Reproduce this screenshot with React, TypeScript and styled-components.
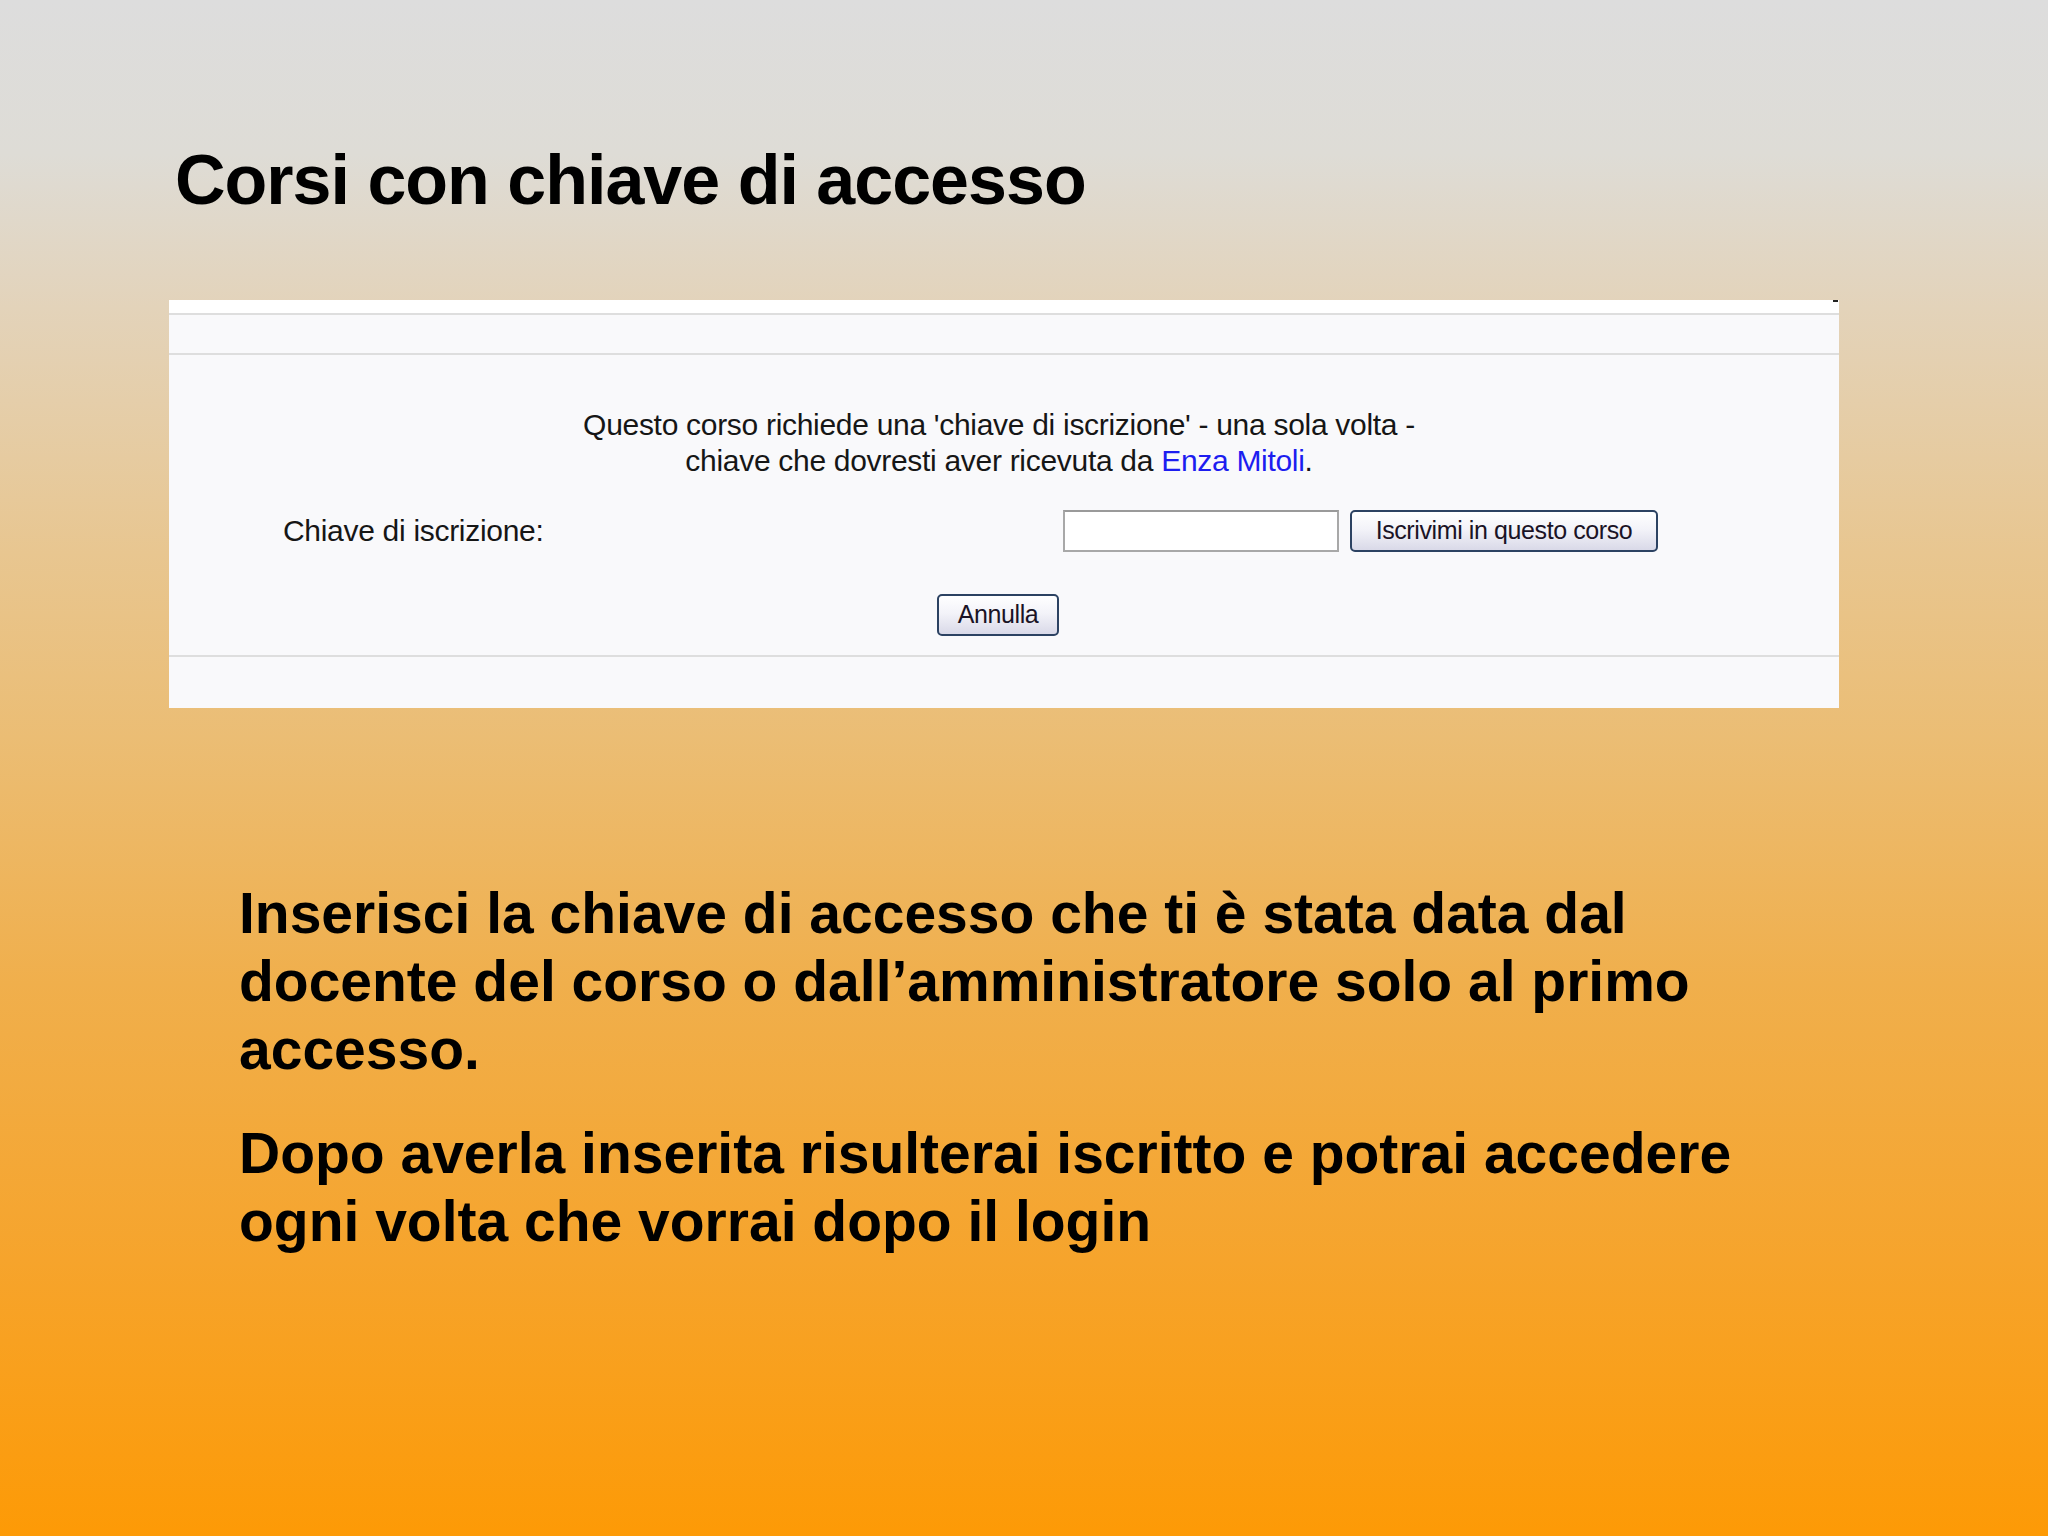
import styled, { createGlobalStyle } from "styled-components";

const GlobalStyle = createGlobalStyle`
  html, body {
    margin: 0;
    padding: 0;
    overflow: hidden;
  }

  body {
    font-family: "Liberation Sans", Arial, sans-serif;
    color: #000;
  }
`;

const Slide = styled.div`
  width: 2048px;
  height: 1536px;
  box-sizing: border-box;
  padding: 145px 0 0 0;
  display: flex;
  flex-direction: column;
  background: linear-gradient(
    to bottom,
    #dddddd 0%,
    #dedcd6 10%,
    #e3d3ba 20%,
    #e8c690 36%,
    #ebbd74 48%,
    #f0af4c 64%,
    #f6a42c 82%,
    #fd9a06 100%
  );
`;

const Title = styled.h1`
  margin: 0 0 0 175px;
  font-size: 70px;
  line-height: 70px;
  font-weight: 700;
  letter-spacing: -1px;
`;

const Panel = styled.div`
  position: relative;
  margin: 85px 0 0 169px;
  width: 1670px;
  height: 408px;
  background: #f9f9fb;
  display: flex;
  flex-direction: column;

  &::after {
    content: "";
    position: absolute;
    top: 0;
    right: 1px;
    width: 5px;
    height: 2px;
    background: #222;
  }
`;

const Band = styled.div<{ $h: number; $white?: boolean }>`
  height: ${(p) => p.$h}px;
  background: ${(p) => (p.$white ? "#ffffff" : "transparent")};
`;

const Rule = styled.div`
  height: 2px;
  background: #dedede;
`;

const Content = styled.div`
  height: 300px;
  box-sizing: border-box;
  padding-top: 52px;
  display: flex;
  flex-direction: column;
  align-items: stretch;
`;

const Notice = styled.p`
  margin: 0;
  padding-right: 10px;
  text-align: center;
  font-size: 30px;
  line-height: 36px;
  letter-spacing: -0.3px;
  color: #161616;

  & > a {
    color: #1d1df0;
    text-decoration: none;
  }
`;

const FormRow = styled.div`
  margin-top: 31px;
  display: grid;
  grid-template-columns: 780px auto;
  align-items: center;
  padding-left: 114px;
  height: 42px;
`;

const Label = styled.label`
  font-size: 30px;
  letter-spacing: -0.3px;
  color: #161616;
`;

const Controls = styled.div`
  display: flex;
  align-items: center;
  gap: 11px;
`;

const KeyInput = styled.input`
  width: 276px;
  height: 42px;
  box-sizing: border-box;
  border: 2px solid #a8a8a8;
  border-top-color: #9a9a9a;
  background: #ffffff;
  margin: 0;
  padding: 0 6px;
  font-size: 24px;
  font-family: "Liberation Sans", Arial, sans-serif;
`;

const Button = styled.button<{ $w: number }>`
  width: ${(p) => p.$w}px;
  height: 42px;
  box-sizing: border-box;
  margin: 0;
  padding: 0 0 2px;
  border: 2px solid #2c4262;
  border-radius: 5px;
  background: linear-gradient(to bottom, #ffffff 0%, #f3f3f9 45%, #d9d9e8 100%);
  font-family: "Liberation Sans", Arial, sans-serif;
  font-size: 25px;
  letter-spacing: -0.4px;
  color: #1a1326;
  cursor: pointer;
`;

const CancelRow = styled.div`
  margin-top: 42px;
  display: flex;
  justify-content: center;
  padding-right: 12px;
`;

const Body = styled.div`
  margin: 171px 0 0 239px;
  width: 1545px;
  display: flex;
  flex-direction: column;
  gap: 36px;
`;

const Para = styled.p`
  margin: 0;
  font-size: 57px;
  line-height: 68px;
  font-weight: 700;
  color: #000;
`;

export default function App(): JSX.Element {
  return (
    <>
      <GlobalStyle />
      <Slide>
        <Title>Corsi con chiave di accesso</Title>

        <Panel>
          <Band $h={13} $white />
          <Rule />
          <Band $h={38} />
          <Rule />
          <Content>
            <Notice>
              Questo corso richiede una 'chiave di iscrizione' - una sola volta -
              <br />
              chiave che dovresti aver ricevuta da <a href="#">Enza Mitoli</a>.
            </Notice>

            <FormRow>
              <Label htmlFor="chiave">Chiave di iscrizione:</Label>
              <Controls>
                <KeyInput id="chiave" type="password" />
                <Button $w={308}>Iscrivimi in questo corso</Button>
              </Controls>
            </FormRow>

            <CancelRow>
              <Button $w={122}>Annulla</Button>
            </CancelRow>
          </Content>
          <Rule />
          <Band $h={46} />
        </Panel>

        <Body>
          <Para>
            Inserisci la chiave di accesso che ti è stata data dal docente del
            corso o dall’amministratore solo al primo accesso.
          </Para>
          <Para>
            Dopo averla inserita risulterai iscritto e potrai accedere ogni volta
            che vorrai dopo il login
          </Para>
        </Body>
      </Slide>
    </>
  );
}
